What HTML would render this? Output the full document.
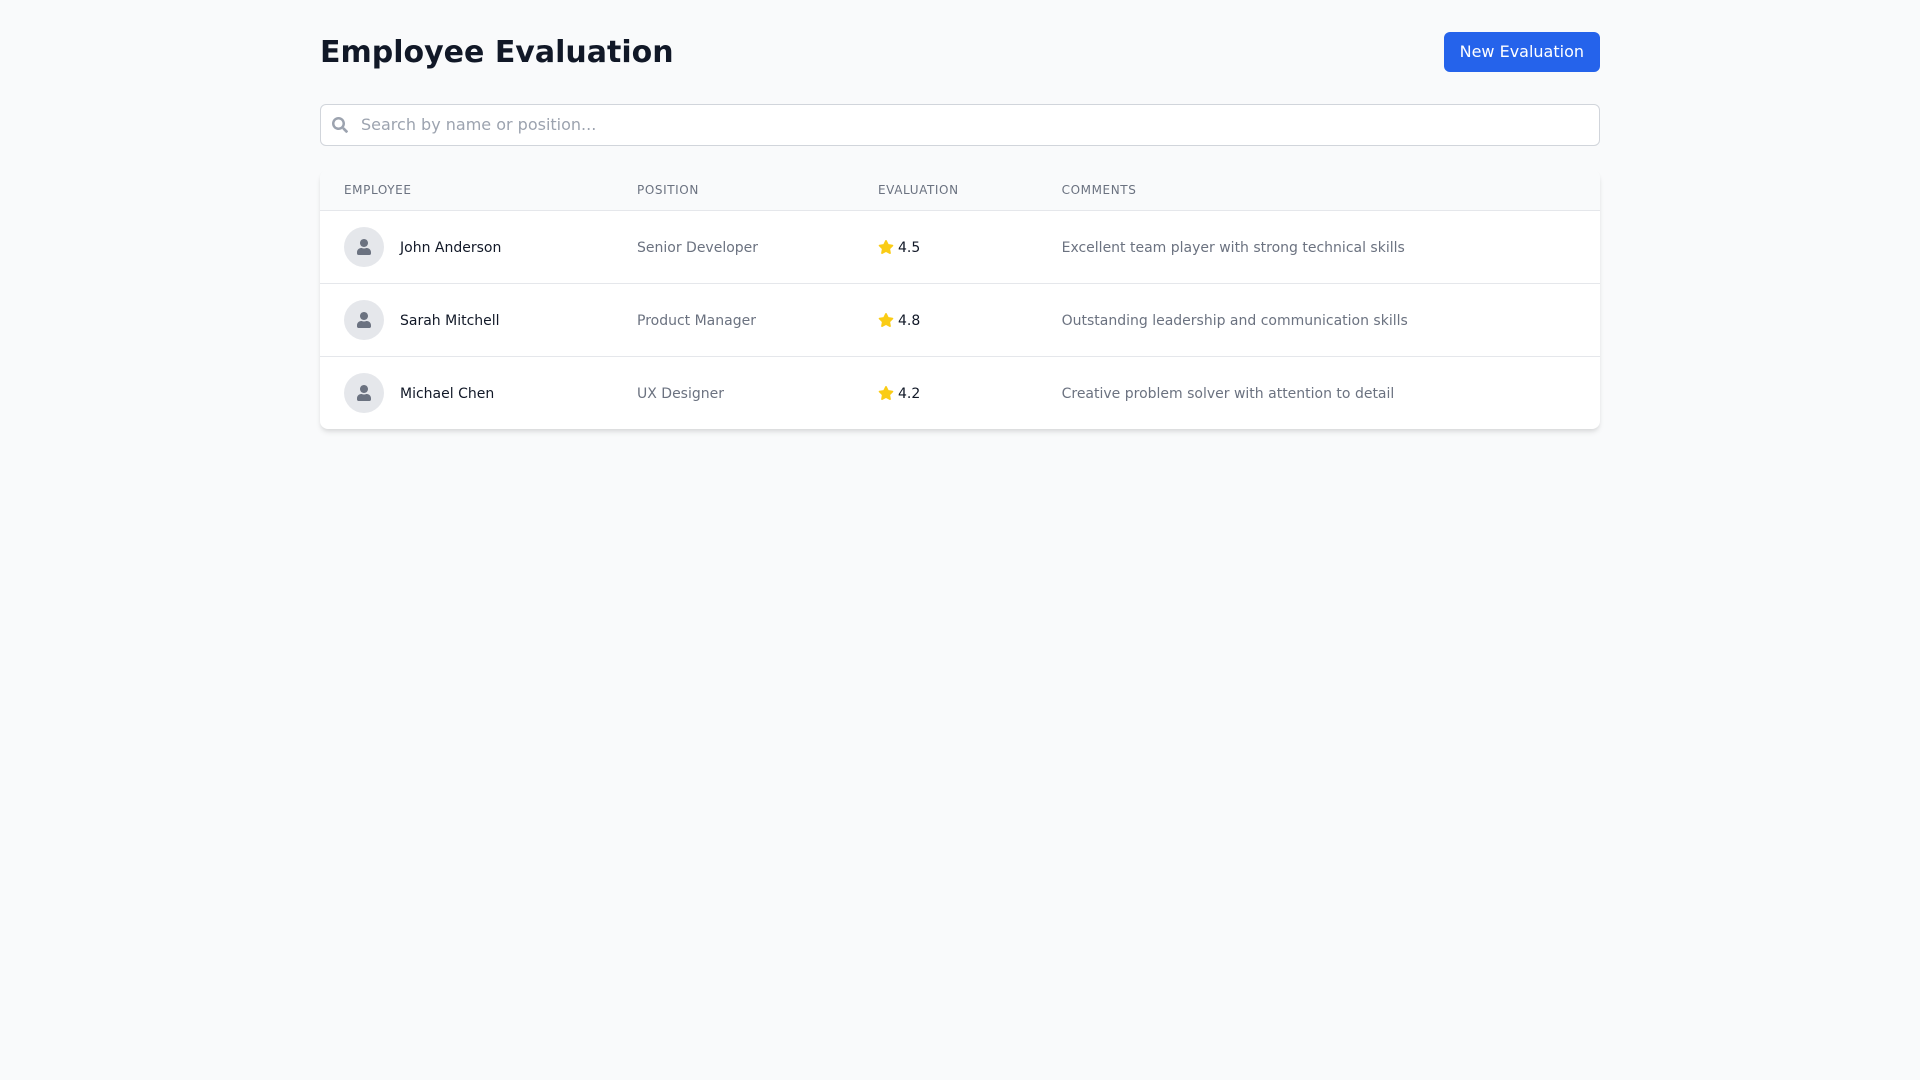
<!DOCTYPE html>
<html lang="en">
<head>
<meta charset="utf-8">
<title>Employee Evaluation</title>
<style>
*{box-sizing:border-box;margin:0;padding:0}
html,body{width:1920px;height:1080px;overflow:hidden}
body{background:#f9fafb;font-family:"DejaVu Sans",sans-serif;color:#111827;line-height:1.5;position:relative}
.wrap{position:absolute;left:320px;top:32px;width:1280px}
.head{display:flex;justify-content:space-between;align-items:center;height:40px;margin-bottom:32px}
h1{font-size:30px;line-height:36px;font-weight:700;color:#111827;position:relative;top:1px}
.btn{display:block;height:40px;padding:8px 16px;background:#2563eb;color:#fff;border:0;border-radius:6px;font:16px/24px "DejaVu Sans",sans-serif}
.search{position:relative;height:42px;margin-bottom:24px}
.search input{display:block;width:100%;height:42px;padding:8px 16px 10px 40px;border:1px solid #d1d5db;border-radius:6px;background:#fff;font:16px/20px "DejaVu Sans",sans-serif;color:#111827;outline:none}
.search input::placeholder{color:#9ca3af;opacity:1}
.search svg{position:absolute;left:12px;top:13px;width:16px;height:16px;fill:#9ca3af}
.card{background:#fff;border-radius:8px;overflow:hidden;box-shadow:0 4px 6px -1px rgba(0,0,0,.1),0 2px 4px -1px rgba(0,0,0,.06);height:259px}
table{width:1280px;border-collapse:separate;border-spacing:0;table-layout:fixed}
th{height:41px;padding:12px 24px;background:#f9fafb;border-bottom:1px solid #e5e7eb;text-align:left;font-size:12px;line-height:16px;font-weight:400;color:#6b7280;letter-spacing:.6px;text-transform:uppercase}
td{height:73px;padding:16px 24px;border-bottom:1px solid #e5e7eb;font-size:14px;line-height:20px;color:#6b7280;white-space:nowrap}
tr:last-child td{border-bottom:0;height:72px}
th:last-child,td:last-child{padding-left:23.6px}
.t{position:relative;top:1px}
.emp{display:flex;align-items:center}
.av{width:40px;height:40px;border-radius:50%;background:#e5e7eb;display:flex;align-items:center;justify-content:center;margin-right:16px;flex:none}
.av svg{width:14px;height:16px;fill:#6b7280;display:block}
.name{color:#111827}
.rate{display:flex;align-items:center;color:#111827}
.rate svg{width:16px;height:14px;fill:#facc15;margin-right:4px;display:block;flex:none}
</style>
</head>
<body>
<div class="wrap">
  <div class="head">
    <h1>Employee Evaluation</h1>
    <button class="btn">New Evaluation</button>
  </div>
  <div class="search">
    <svg viewBox="0 0 512 512"><path d="M505 442.700L405.300 343c-4.500-4.500-10.600-7-17-7H372c27.600-35.300 44-79.700 44-128C416 93.100 322.900 0 208 0S0 93.100 0 208s93.100 208 208 208c48.300 0 92.700-16.400 128-44v16.300c0 6.400 2.500 12.500 7 17l99.700 99.700c9.400 9.400 24.600 9.400 33.900 0l28.300-28.300c9.400-9.400 9.400-24.600.1-34zM208 336c-70.700 0-128-57.200-128-128 0-70.700 57.200-128 128-128 70.700 0 128 57.200 128 128 0 70.700-57.200 128-128 128z"/></svg>
    <input type="text" placeholder="Search by name or position...">
  </div>
  <div class="card">
    <table>
      <colgroup><col style="width:293px"><col style="width:241px"><col style="width:184px"><col style="width:562px"></colgroup>
      <thead><tr><th>Employee</th><th>Position</th><th>Evaluation</th><th>Comments</th></tr></thead>
      <tbody>
        <tr>
          <td><div class="emp"><div class="av"><svg viewBox="0 0 448 512"><path d="M224 256c70.700 0 128-57.300 128-128S294.700 0 224 0 96 57.300 96 128s57.300 128 128 128zm89.600 32h-16.700c-22.200 10.200-46.900 16-72.900 16s-50.600-5.800-72.900-16h-16.700C60.200 288 0 348.200 0 422.400V464c0 26.500 21.500 48 48 48h352c26.500 0 48-21.500 48-48v-41.600c0-74.200-60.200-134.400-134.400-134.400z"/></svg></div><span class="name t">John Anderson</span></div></td>
          <td><span class="t">Senior Developer</span></td>
          <td><div class="rate"><svg viewBox="0 0 576 512"><path d="M259.300 17.800L194 150.200 47.900 171.500c-26.200 3.800-36.700 36.100-17.700 54.600l105.700 103-25 145.500c-4.500 26.300 23.200 46 46.400 33.700L288 439.600l130.700 68.700c23.200 12.200 50.900-7.400 46.400-33.700l-25-145.500 105.700-103c19-18.500 8.500-50.800-17.700-54.600L382 150.200 316.700 17.800c-11.700-23.600-45.600-23.900-57.400 0z"/></svg><span class="t">4.5</span></div></td>
          <td><span class="t">Excellent team player with strong technical skills</span></td>
        </tr>
        <tr>
          <td><div class="emp"><div class="av"><svg viewBox="0 0 448 512"><path d="M224 256c70.700 0 128-57.300 128-128S294.700 0 224 0 96 57.300 96 128s57.300 128 128 128zm89.600 32h-16.700c-22.200 10.200-46.900 16-72.900 16s-50.600-5.800-72.900-16h-16.700C60.200 288 0 348.200 0 422.400V464c0 26.500 21.500 48 48 48h352c26.500 0 48-21.500 48-48v-41.600c0-74.200-60.200-134.400-134.400-134.400z"/></svg></div><span class="name t">Sarah Mitchell</span></div></td>
          <td><span class="t">Product Manager</span></td>
          <td><div class="rate"><svg viewBox="0 0 576 512"><path d="M259.300 17.800L194 150.200 47.900 171.500c-26.200 3.800-36.700 36.100-17.700 54.600l105.700 103-25 145.500c-4.500 26.300 23.200 46 46.400 33.700L288 439.600l130.700 68.700c23.200 12.200 50.900-7.400 46.400-33.700l-25-145.500 105.700-103c19-18.500 8.500-50.800-17.700-54.600L382 150.200 316.700 17.800c-11.700-23.600-45.600-23.900-57.400 0z"/></svg><span class="t">4.8</span></div></td>
          <td><span class="t">Outstanding leadership and communication skills</span></td>
        </tr>
        <tr>
          <td><div class="emp"><div class="av"><svg viewBox="0 0 448 512"><path d="M224 256c70.700 0 128-57.300 128-128S294.700 0 224 0 96 57.300 96 128s57.300 128 128 128zm89.600 32h-16.700c-22.200 10.200-46.900 16-72.900 16s-50.600-5.800-72.900-16h-16.700C60.200 288 0 348.200 0 422.400V464c0 26.500 21.500 48 48 48h352c26.500 0 48-21.500 48-48v-41.600c0-74.200-60.200-134.400-134.400-134.400z"/></svg></div><span class="name t">Michael Chen</span></div></td>
          <td><span class="t">UX Designer</span></td>
          <td><div class="rate"><svg viewBox="0 0 576 512"><path d="M259.300 17.800L194 150.200 47.900 171.500c-26.200 3.800-36.700 36.100-17.700 54.600l105.700 103-25 145.500c-4.500 26.300 23.200 46 46.400 33.700L288 439.600l130.700 68.700c23.200 12.200 50.900-7.400 46.400-33.700l-25-145.500 105.700-103c19-18.500 8.500-50.800-17.700-54.600L382 150.200 316.700 17.800c-11.700-23.600-45.600-23.900-57.400 0z"/></svg><span class="t">4.2</span></div></td>
          <td><span class="t">Creative problem solver with attention to detail</span></td>
        </tr>
      </tbody>
    </table>
  </div>
</div>
</body>
</html>
